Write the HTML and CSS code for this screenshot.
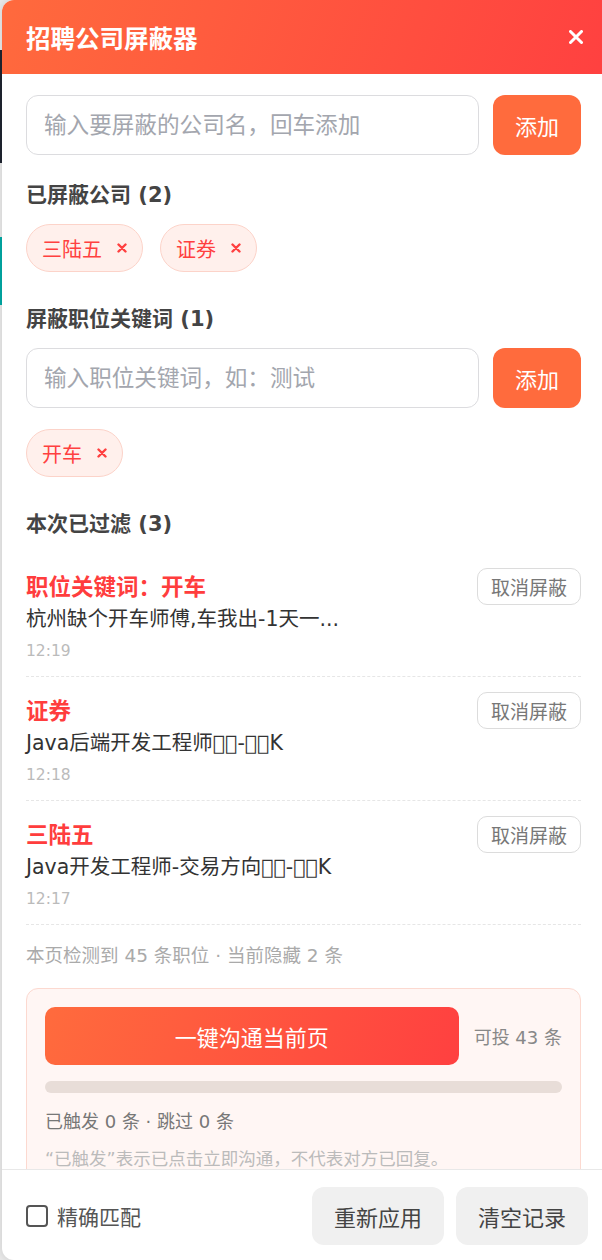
FILE: index.html
```html
<!DOCTYPE html>
<html lang="zh-CN">
<head>
    <meta charset="UTF-8">
    <meta name="viewport" content="width=device-width, initial-scale=1.0">
    <title>招聘公司屏蔽器</title>
    <link rel="stylesheet" href="styles.css">
</head>
<body>

    <div class="page">
        <!-- strip of the job site visible behind the panel -->
        <div class="page-edge"></div>

        <!-- Blocker Panel -->
        <div class="panel">
            <div class="panel-header">
                <h2>招聘公司屏蔽器</h2>
                <button class="close-btn" title="关闭">
                    <svg width="14" height="14" viewBox="0 0 14 14"><path d="M1.5 1.5 L12.5 12.5 M12.5 1.5 L1.5 12.5" stroke="#fff" stroke-width="3" stroke-linecap="round"/></svg>
                </button>
            </div>

            <div class="panel-body">
                <!-- Companies -->
                <div class="input-row">
                    <input type="text" placeholder="输入要屏蔽的公司名，回车添加">
                    <button class="add-btn">添加</button>
                </div>

                <h3 class="section-title">已屏蔽公司 (2)</h3>
                <div class="tags">
                    <span class="tag">三陆五<svg class="tag-x" width="10" height="10" viewBox="0 0 10 10"><path d="M1.5 1.5 L8.5 8.5 M8.5 1.5 L1.5 8.5" stroke="#ff4040" stroke-width="2.4" stroke-linecap="round"/></svg></span>
                    <span class="tag">证券<svg class="tag-x" width="10" height="10" viewBox="0 0 10 10"><path d="M1.5 1.5 L8.5 8.5 M8.5 1.5 L1.5 8.5" stroke="#ff4040" stroke-width="2.4" stroke-linecap="round"/></svg></span>
                </div>

                <!-- Keywords -->
                <h3 class="section-title spaced">屏蔽职位关键词 (1)</h3>
                <div class="input-row">
                    <input type="text" placeholder="输入职位关键词，如：测试">
                    <button class="add-btn">添加</button>
                </div>
                <div class="tags tags-below-input">
                    <span class="tag">开车<svg class="tag-x" width="10" height="10" viewBox="0 0 10 10"><path d="M1.5 1.5 L8.5 8.5 M8.5 1.5 L1.5 8.5" stroke="#ff4040" stroke-width="2.4" stroke-linecap="round"/></svg></span>
                </div>

                <!-- Filtered this session -->
                <h3 class="section-title spaced">本次已过滤 (3)</h3>
                <div class="filtered-list">
                    <div class="filtered-item">
                        <div class="item-head">
                            <span class="item-reason">职位关键词：开车</span>
                            <button class="undo-btn">取消屏蔽</button>
                        </div>
                        <div class="item-job">杭州缺个开车师傅,车我出-1天一...</div>
                        <div class="item-time">12:19</div>
                    </div>
                    <div class="filtered-item">
                        <div class="item-head">
                            <span class="item-reason">证券</span>
                            <button class="undo-btn">取消屏蔽</button>
                        </div>
                        <div class="item-job">Java后端开发工程师&#xe031;&#xe032;-&#xe033;&#xe034;K</div>
                        <div class="item-time">12:18</div>
                    </div>
                    <div class="filtered-item">
                        <div class="item-head">
                            <span class="item-reason">三陆五</span>
                            <button class="undo-btn">取消屏蔽</button>
                        </div>
                        <div class="item-job">Java开发工程师-交易方向&#xe031;&#xe032;-&#xe033;&#xe034;K</div>
                        <div class="item-time">12:17</div>
                    </div>
                </div>

                <p class="summary">本页检测到 45 条职位 · 当前隐藏 2 条</p>

                <!-- Bulk greet -->
                <div class="bulk-card">
                    <div class="bulk-row">
                        <button class="bulk-btn">一键沟通当前页</button>
                        <span class="bulk-count">可投 43 条</span>
                    </div>
                    <div class="progress"><div class="progress-fill" style="width: 0%"></div></div>
                    <p class="bulk-stats">已触发 0 条 · 跳过 0 条</p>
                    <p class="bulk-note">“已触发”表示已点击立即沟通，不代表对方已回复。</p>
                </div>
            </div>

            <div class="panel-footer">
                <label class="exact">
                    <span class="checkbox"></span>
                    精确匹配
                </label>
                <div class="footer-actions">
                    <button class="grey-btn">重新应用</button>
                    <button class="grey-btn">清空记录</button>
                </div>
            </div>
        </div>
    </div>

</body>
</html>
```

FILE: styles.css
```css
/* Basic Reset */
body {
    margin: 0;
    padding: 0;
    font-family: "DejaVu Sans", "Noto Sans CJK SC", sans-serif;
    background-color: #e8e8e8;
    overflow: hidden;
}

button {
    font-family: inherit;
    border: none;
    cursor: pointer;
}

.page {
    display: flex;
    height: 1260px;
}

/* bits of the site behind the panel */
.page-edge {
    width: 2px;
    flex-shrink: 0;
    background: linear-gradient(to bottom,
        #e8e8e8 0, #e8e8e8 50px,
        #1f2430 50px, #1f2430 163px,
        #e8e8e8 163px, #e8e8e8 237px,
        #00a9a5 237px, #00a9a5 305px,
        #e8e8e8 305px);
}

/* Panel */
.panel {
    width: 610px;
    flex-shrink: 0;
    height: 1260px;
    background-color: white;
    border-radius: 12px 0 0 12px;
    box-shadow: 0 0 8px rgba(0, 0, 0, 0.12);
    display: flex;
    flex-direction: column;
    overflow: hidden;
}

.panel-header {
    height: 74px;
    flex-shrink: 0;
    padding: 0 24px;
    display: flex;
    align-items: center;
    justify-content: space-between;
    background: linear-gradient(110deg, #ff6a3d 0%, #ff4040 100%);
}

.panel-header h2 {
    margin: 0;
    color: white;
    font-size: 24.5px;
    font-weight: bold;
}

.close-btn {
    width: 24px;
    height: 24px;
    padding: 0;
    background: none;
    display: flex;
    align-items: center;
    justify-content: center;
}

.panel-body {
    flex: 1;
    overflow: hidden;
    padding: 21px 31px 0 24px;
}

/* Inputs */
.input-row {
    display: flex;
    gap: 14px;
    height: 60px;
}

.input-row input {
    flex: 1;
    min-width: 0;
    border: 1px solid #dcdcdf;
    border-radius: 12px;
    padding: 0 17px;
    font-family: inherit;
    font-size: 22.6px;
    color: #333;
    outline: none;
}

.input-row input::placeholder {
    color: #a3a6ae;
}

.add-btn {
    width: 88px;
    background-color: #ff6b3d;
    color: white;
    font-size: 22px;
    border-radius: 12px;
}

.section-title {
    margin: 26px 0 15px;
    font-size: 21px;
    line-height: 28px;
    font-weight: bold;
    color: #444;
}

.section-title.spaced {
    margin-top: 33px;
}

/* Tags */
.tags {
    display: flex;
    flex-wrap: wrap;
    gap: 17px;
}

.tags-below-input {
    margin-top: 21px;
}

.tag {
    display: inline-flex;
    align-items: center;
    height: 48px;
    box-sizing: border-box;
    padding: 0 15px;
    border: 1px solid #fcd3c9;
    border-radius: 24px;
    background-color: #fff0ec;
    color: #ff4040;
    font-size: 20px;
}

.tag-x {
    margin-left: 15px;
}

/* Filtered list */
.filtered-item {
    padding: 15px 0 13px;
    border-bottom: 1px dashed #e6e6e6;
}

.item-head {
    display: flex;
    align-items: center;
    justify-content: space-between;
    height: 37px;
}

.item-reason {
    margin-top: -4px;
    color: #ff3d3d;
    font-size: 22.5px;
    font-weight: bold;
}

.undo-btn {
    height: 37px;
    padding: 0 13px;
    background-color: white;
    border: 1px solid #dcdcdc;
    border-radius: 10px;
    color: #777;
    font-size: 19px;
}

.item-job {
    font-size: 20.5px;
    line-height: 28px;
    color: #333;
}

.item-time {
    margin-top: 6px;
    font-size: 15.5px;
    line-height: 24px;
    color: #bbb;
}

.summary {
    margin: 18px 0 19px;
    font-size: 18.5px;
    line-height: 26px;
    color: #aaa;
}

/* Bulk greet card */
.bulk-card {
    border: 1px solid #fcd9d0;
    border-radius: 12px;
    background-color: #fff6f4;
    padding: 18px;
}

.bulk-row {
    display: flex;
    align-items: center;
    gap: 15px;
}

.bulk-btn {
    flex: 1;
    height: 58px;
    border-radius: 10px;
    background: linear-gradient(110deg, #ff6b3d 0%, #ff4040 100%);
    color: white;
    font-size: 22px;
}

.bulk-count {
    font-size: 18px;
    color: #888;
}

.progress {
    margin-top: 16px;
    height: 12px;
    border-radius: 6px;
    background-color: #e8ddd8;
    overflow: hidden;
}

.progress-fill {
    height: 100%;
    background-color: #ff6b3d;
}

.bulk-stats {
    margin: 16px 0 0;
    font-size: 18px;
    line-height: 26px;
    color: #777;
}

.bulk-note {
    margin: 12px 0 0;
    font-size: 17.5px;
    line-height: 24px;
    color: #bbb;
}

/* Footer */
.panel-footer {
    flex-shrink: 0;
    height: 91px;
    box-sizing: border-box;
    padding: 17px 24px 15px;
    border-top: 1px solid #e8e8e8;
    display: flex;
    align-items: center;
    justify-content: space-between;
}

.exact {
    display: flex;
    align-items: center;
    gap: 9px;
    font-size: 21px;
    color: #555;
}

.checkbox {
    width: 22px;
    height: 22px;
    box-sizing: border-box;
    border: 2px solid #555;
    border-radius: 4px;
}

.footer-actions {
    display: flex;
    gap: 12px;
}

.grey-btn {
    height: 58px;
    padding: 0 22px;
    border-radius: 12px;
    background-color: #f0f0f0;
    color: #444;
    font-size: 22px;
}
```
